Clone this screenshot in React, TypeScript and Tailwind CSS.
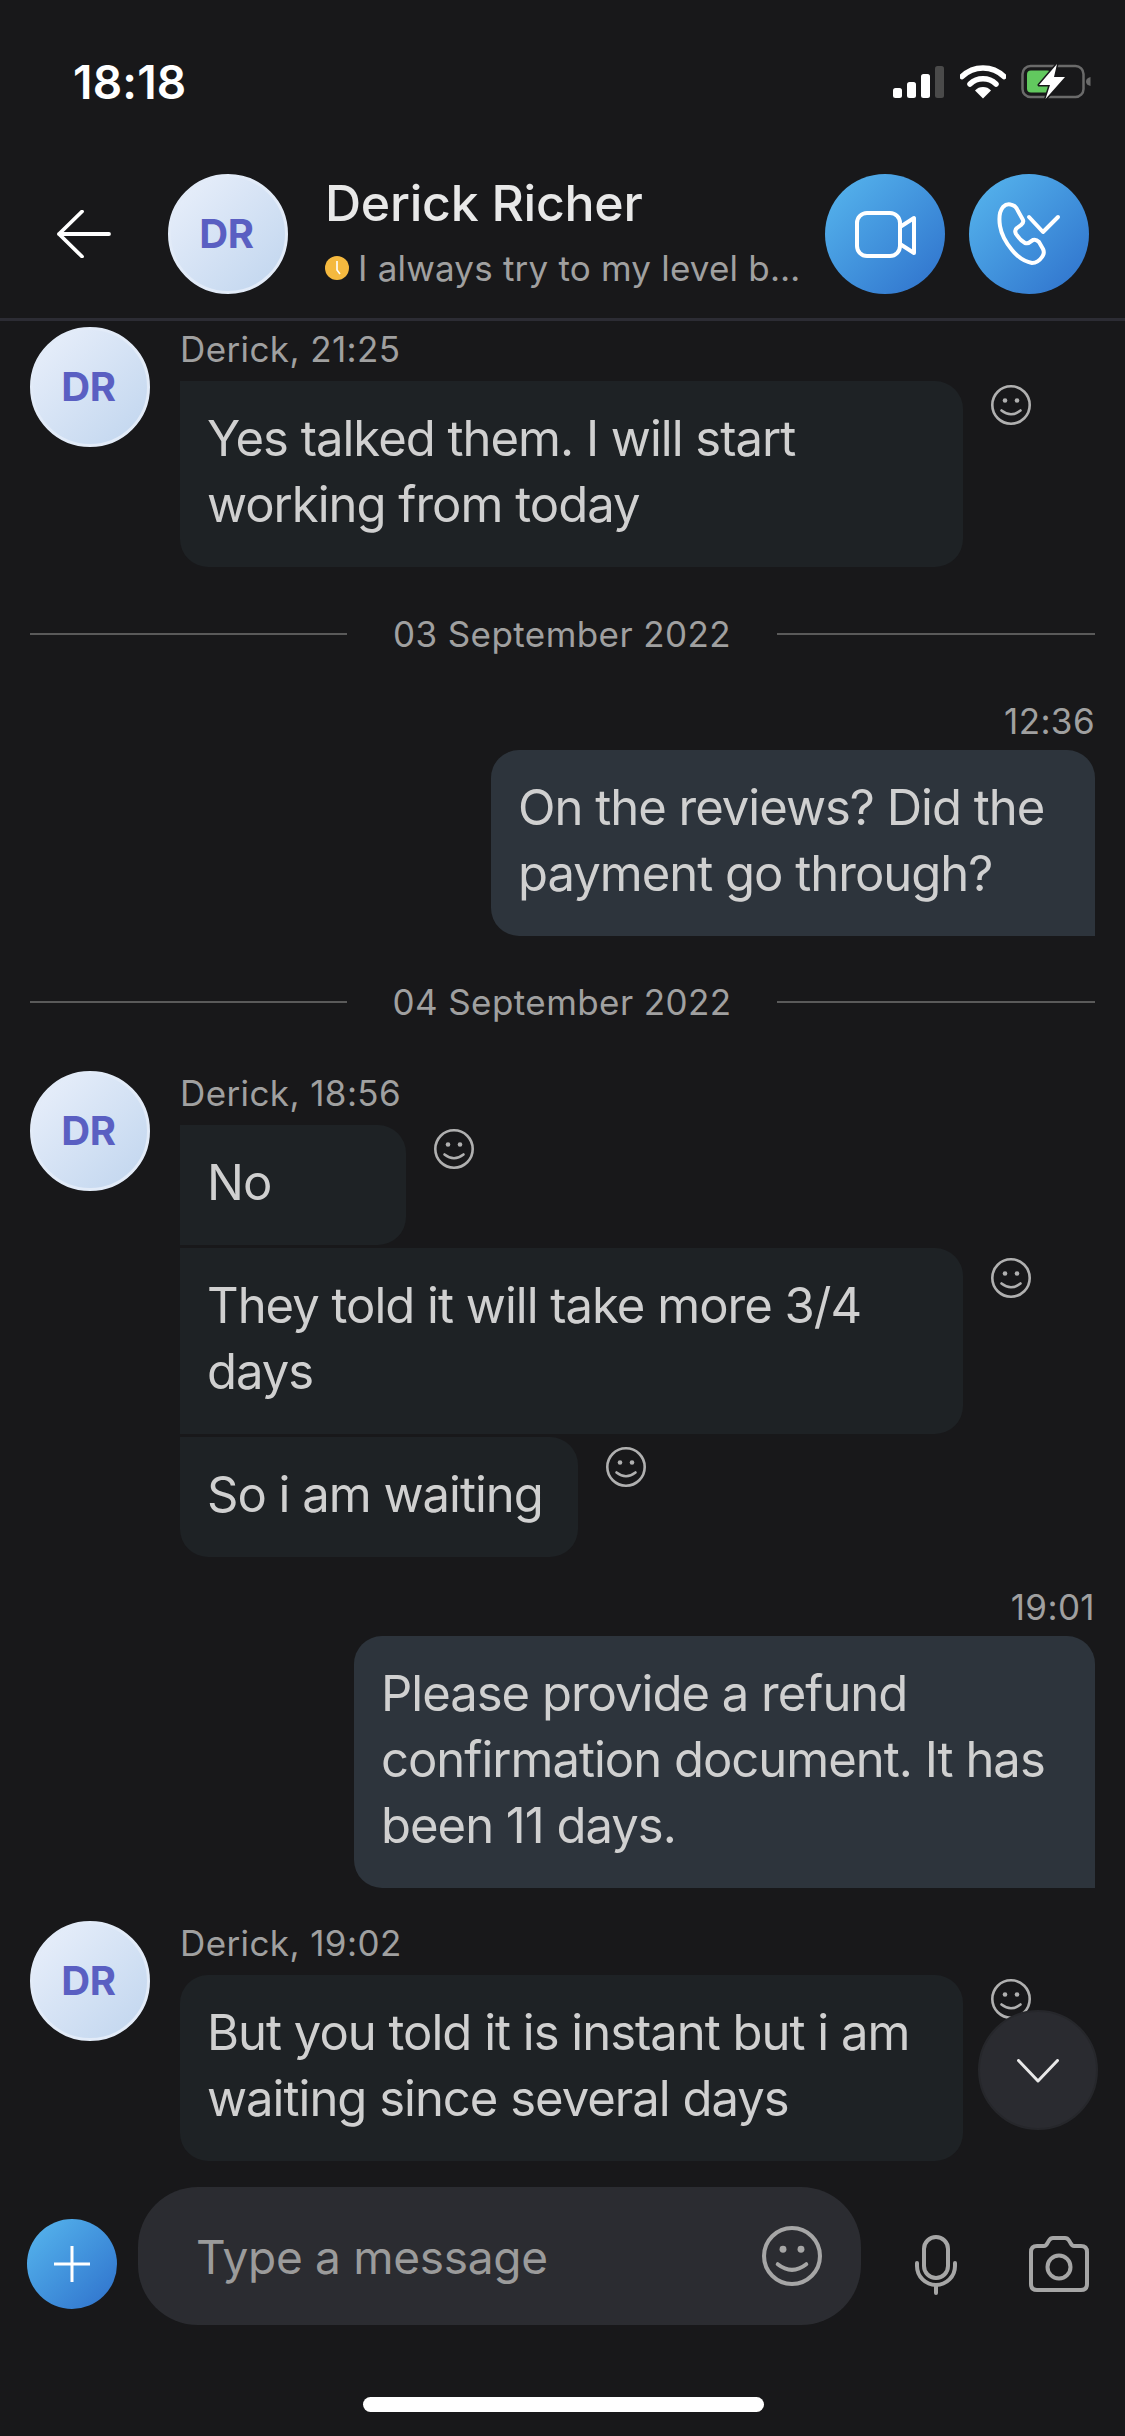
import React from "react";

const font = { fontFamily: "Inter, 'Liberation Sans', sans-serif" };

function Smile({ size, color, sw }: { size: number; color: string; sw: number }) {
  return (
    <svg width={size} height={size} viewBox="0 0 40 40" fill="none" className="block shrink-0">
      <circle cx="20" cy="20" r={20 - sw / 2} stroke={color} strokeWidth={sw} />
      <circle cx="14" cy="15.5" r="2.3" fill={color} />
      <circle cx="26" cy="15.5" r="2.3" fill={color} />
      <path d="M10.5 25.5 Q20 33 29.5 25.5" stroke={color} strokeWidth={sw} strokeLinecap="round" />
    </svg>
  );
}

function Avatar() {
  return (
    <div className="w-[120px] h-[120px] rounded-full shrink-0 flex items-center justify-center border-[3px] border-[#e2ebf8] bg-gradient-to-br from-[#eaf0fb] to-[#c0d5ee]">
      <span className="text-[40px] font-bold text-[#5a5fc2] -ml-[3px] tracking-[-0.3px]">DR</span>
    </div>
  );
}

function Bubble({ w, h, corners, sent, children }: { w: string; h: string; corners: string; sent?: boolean; children: React.ReactNode }) {
  return (
    <div className={`${w} ${h} ${corners} ${sent ? "bg-[#2d343c]" : "bg-[#1e2225]"} shrink-0 pl-[27px] pt-[25px] text-[49px] leading-[66px] tracking-[-1px] text-[#d0d0d0]`}>
      {children}
    </div>
  );
}

function DateRow({ label, className }: { label: string; className: string }) {
  return (
    <div className={`${className} h-[60px] flex items-center justify-between px-[30px]`}>
      <div className="w-[317px] h-[2px] bg-[#5a5a5a]" />
      <span className="text-[35px] tracking-[0.42px] text-[#a0a0a0]">{label}</span>
      <div className="w-[318px] h-[2px] bg-[#5a5a5a]" />
    </div>
  );
}

function Name({ children }: { children: React.ReactNode }) {
  return <div className="h-[54px] leading-[45px] text-[35px] tracking-[0.4px] text-[#a0a0a0]">{children}</div>;
}

function Time({ children }: { children: React.ReactNode }) {
  return <div className="h-[56px] leading-[55px] pr-[30px] text-right text-[35px] tracking-[0.4px] text-[#a0a0a0]">{children}</div>;
}

export default function App() {
  return (
    <div className="w-[1125px] h-[2436px] flex flex-col overflow-hidden bg-[#18181a]" style={font}>
      {/* status bar */}
      <div className="h-[174px] shrink-0">
        <div className="h-[164px] pl-[73px] pr-[34px] flex items-center justify-between">
          <span className="text-[46px] font-semibold tracking-[0.2px] text-white">18:18</span>
          <div className="flex items-center">
            <svg width="51" height="32" viewBox="0 0 51 32" className="block">
              <rect x="0" y="22" width="9" height="10" rx="2.5" fill="#fff" />
              <rect x="14" y="16" width="9" height="16" rx="2.5" fill="#fff" />
              <rect x="28" y="8" width="9" height="24" rx="2.5" fill="#fff" />
              <rect x="42" y="0" width="9" height="32" rx="2.5" fill="#4a4a4a" />
            </svg>
            <svg width="46" height="34" viewBox="0 0 46 34" className="block ml-[16px]">
              <path d="M2 11.5 A30 30 0 0 1 44 11.5" stroke="#fff" strokeWidth="5.5" fill="none" strokeLinecap="round" />
              <path d="M10 19 A19 19 0 0 1 36 19" stroke="#fff" strokeWidth="5.5" fill="none" strokeLinecap="round" />
              <path d="M23 33.5 L15 25.5 A11 11 0 0 1 31 25.5 Z" fill="#fff" />
            </svg>
            <svg width="70" height="36" viewBox="0 0 70 36" className="block ml-[15px]">
              <rect x="1.5" y="2" width="61" height="31" rx="8" stroke="#6a6a6a" strokeWidth="2.5" fill="none" />
              <path d="M69.5 13 V22 Q65 21 65 17.5 Q65 14 69.5 13Z" fill="#6a6a6a" />
              <rect x="6" y="6.5" width="24" height="22" rx="4" fill="#62c95f" />
              <path d="M36 0 L18 21 H29 L24.5 35 L44 13 H33 Z" fill="#fff" stroke="#18181a" strokeWidth="3" paintOrder="stroke" strokeLinejoin="round" />
            </svg>
          </div>
        </div>
      </div>

      {/* header */}
      <div className="h-[147px] shrink-0 border-b-[3px] border-[#2c2c34] flex items-start pl-[57px] pr-[36px]">
        <div className="w-[111px] h-[120px] flex items-center shrink-0">
          <svg width="54" height="48" viewBox="0 0 54 48" fill="none" className="block">
            <path d="M52 24 H2 M25 1.5 L2 24 L25 46.5" stroke="#fff" strokeWidth="3.8" strokeLinecap="round" strokeLinejoin="round" />
          </svg>
        </div>
        <Avatar />
        <div className="ml-[37px] flex-1 min-w-0">
          <div className="h-[58px] leading-[58px] text-[50px] font-medium tracking-[-0.25px] text-[#e8e8e8]">Derick Richer</div>
          <div className="mt-[11px] h-[50px] flex items-center">
            <svg width="24" height="24" viewBox="0 0 24 24" className="block shrink-0">
              <circle cx="12" cy="12" r="12" fill="#f5b93f" />
              <path d="M12 5 V14 L15 18" stroke="#fff" strokeWidth="1.6" fill="none" />
            </svg>
            <span className="ml-[9px] text-[35px] tracking-[0.2px] text-[#a0a0a0] whitespace-nowrap">I always try to my level b…</span>
          </div>
        </div>
        <div className="flex gap-[24px] shrink-0">
          <div className="w-[120px] h-[120px] rounded-full bg-gradient-to-br from-[#58b7ee] to-[#2f70cb]">
            <svg width="120" height="120" viewBox="0 0 120 120" fill="none" className="block">
              <rect x="32" y="39" width="43" height="43" rx="10" stroke="#fff" strokeWidth="4" />
              <path d="M75 53 L89 44 V79 L75 70" stroke="#fff" strokeWidth="4" strokeLinejoin="round" />
            </svg>
          </div>
          <div className="w-[120px] h-[120px] rounded-full bg-gradient-to-br from-[#58b7ee] to-[#2f70cb]">
            <svg width="120" height="120" viewBox="0 0 120 120" fill="none" className="block">
              <path d="M34 33 Q38 29 43 31 Q47 32 49 37 L54 46 Q55 49 52 51 L48 54 Q45 56 47 60 Q51 66 56 69 Q59 70 61 68 L64 66 Q67 65 70 68 L74 75 Q76 79 73 83 Q69 89 63 89 Q52 87 43 76 Q33 64 31 52 Q29 39 34 33Z" stroke="#fff" strokeWidth="4" strokeLinejoin="round" />
              <path d="M60 43 L74 58 L89 43" stroke="#fff" strokeWidth="4" strokeLinecap="round" strokeLinejoin="round" />
            </svg>
          </div>
        </div>
      </div>

      {/* messages */}
      <div className="flex-1 min-h-0 relative overflow-hidden pt-[6px]">
        <div className="flex pl-[30px]">
          <Avatar />
          <div className="ml-[30px]">
            <Name>Derick, 21:25</Name>
            <div className="flex">
              <Bubble w="w-[783px]" h="h-[186px]" corners="rounded-r-[28px] rounded-bl-[28px]">
                Yes talked them. I will start
                <br />
                working from today
              </Bubble>
              <div className="ml-[28px] mt-[4px]"><Smile size={40} color="#b0b0b0" sw={2.6} /></div>
            </div>
          </div>
        </div>

        <DateRow label="03 September 2022" className="mt-[37px]" />

        <div className="mt-[30px]">
          <Time>12:36</Time>
          <div className="flex justify-end pr-[30px]">
            <Bubble sent w="w-[604px]" h="h-[186px]" corners="rounded-t-[28px] rounded-bl-[28px]">
              On the reviews? Did the
              <br />
              payment go through?
            </Bubble>
          </div>
        </div>

        <DateRow label="04 September 2022" className="mt-[36px]" />

        <div className="mt-[39px] flex pl-[30px]">
          <Avatar />
          <div className="ml-[30px]">
            <Name>Derick, 18:56</Name>
            <div className="flex">
              <Bubble w="w-[226px]" h="h-[120px]" corners="rounded-r-[28px]">No</Bubble>
              <div className="ml-[28px] mt-[4px]"><Smile size={40} color="#b0b0b0" sw={2.6} /></div>
            </div>
            <div className="flex mt-[3px]">
              <Bubble w="w-[783px]" h="h-[186px]" corners="rounded-r-[28px]">
                They told it will take more 3/4
                <br />
                days
              </Bubble>
              <div className="ml-[28px] mt-[10px]"><Smile size={40} color="#b0b0b0" sw={2.6} /></div>
            </div>
            <div className="flex mt-[3px]">
              <Bubble w="w-[398px]" h="h-[120px]" corners="rounded-r-[28px] rounded-bl-[28px]">So i am waiting</Bubble>
              <div className="ml-[28px] mt-[10px]"><Smile size={40} color="#b0b0b0" sw={2.6} /></div>
            </div>
          </div>
        </div>

        <div className="mt-[23px]">
          <Time>19:01</Time>
          <div className="flex justify-end pr-[30px]">
            <Bubble sent w="w-[741px]" h="h-[252px]" corners="rounded-t-[28px] rounded-bl-[28px]">
              Please provide a refund
              <br />
              confirmation document. It has
              <br />
              been 11 days.
            </Bubble>
          </div>
        </div>

        <div className="mt-[33px] flex pl-[30px]">
          <Avatar />
          <div className="ml-[30px]">
            <Name>Derick, 19:02</Name>
            <div className="flex">
              <Bubble w="w-[783px]" h="h-[186px]" corners="rounded-[28px]">
                But you told it is instant but i am
                <br />
                waiting since several days
              </Bubble>
              <div className="ml-[28px] mt-[4px]"><Smile size={40} color="#b0b0b0" sw={2.6} /></div>
            </div>
          </div>
        </div>

        <div className="absolute right-[27px] bottom-[57px] w-[120px] h-[120px] rounded-full bg-[#2a2b30] border-[2px] border-[#26272b] flex items-center justify-center">
          <svg width="42" height="24" viewBox="0 0 42 24" fill="none" className="block mt-[2px]">
            <path d="M1.5 1.5 L21 22 L40.5 1.5" stroke="#e8e8e8" strokeWidth="3" strokeLinecap="round" strokeLinejoin="round" />
          </svg>
        </div>
      </div>

      {/* input */}
      <div className="h-[249px] shrink-0 flex flex-col">
        <div className="h-[138px] flex items-center pl-[27px]">
          <div className="w-[90px] h-[90px] mt-[16px] rounded-full bg-gradient-to-br from-[#58b7ee] to-[#2f70cb] flex items-center justify-center shrink-0">
            <svg width="36" height="36" viewBox="0 0 36 36" fill="none" className="block">
              <path d="M18 0 V36 M0 18 H36" stroke="#fff" strokeWidth="3" />
            </svg>
          </div>
          <div className="ml-[21px] w-[723px] h-[138px] rounded-[60px] bg-[#2b2c31] flex items-center justify-between pl-[58px] pr-[39px] shrink-0">
            <span className="text-[46px] tracking-[-0.3px] text-[#9b9b9b] mt-[2px]">Type a message</span>
            <Smile size={60} color="#a6a6a6" sw={2.7} />
          </div>
          <svg width="42" height="60" viewBox="0 0 42 60" fill="none" className="block ml-[54px] shrink-0 mt-[18px]">
            <rect x="9" y="2" width="24" height="41" rx="12" stroke="#a6a6a6" strokeWidth="4" />
            <path d="M2 28 V31 A19 19 0 0 0 40 31 V28" stroke="#a6a6a6" strokeWidth="4" strokeLinecap="round" />
            <path d="M21 50 V58" stroke="#a6a6a6" strokeWidth="4" strokeLinecap="round" />
          </svg>
          <svg width="60" height="56" viewBox="0 0 60 56" fill="none" className="block ml-[72px] shrink-0 mt-[16px]">
            <path d="M8 10 H15 Q17 10 18.5 7 L20 4.5 Q21.5 2 24 2 H36 Q38.5 2 40 4.5 L41.5 7 Q43 10 45 10 H52 Q58 10 58 16 V48 Q58 54 52 54 H8 Q2 54 2 48 V16 Q2 10 8 10Z" stroke="#a6a6a6" strokeWidth="4" strokeLinejoin="round" />
            <circle cx="30" cy="31" r="11.5" stroke="#a6a6a6" strokeWidth="4" />
          </svg>
        </div>
        <div className="mt-[72px] ml-[363px] w-[401px] h-[15px] rounded-full bg-white" />
      </div>
    </div>
  );
}
